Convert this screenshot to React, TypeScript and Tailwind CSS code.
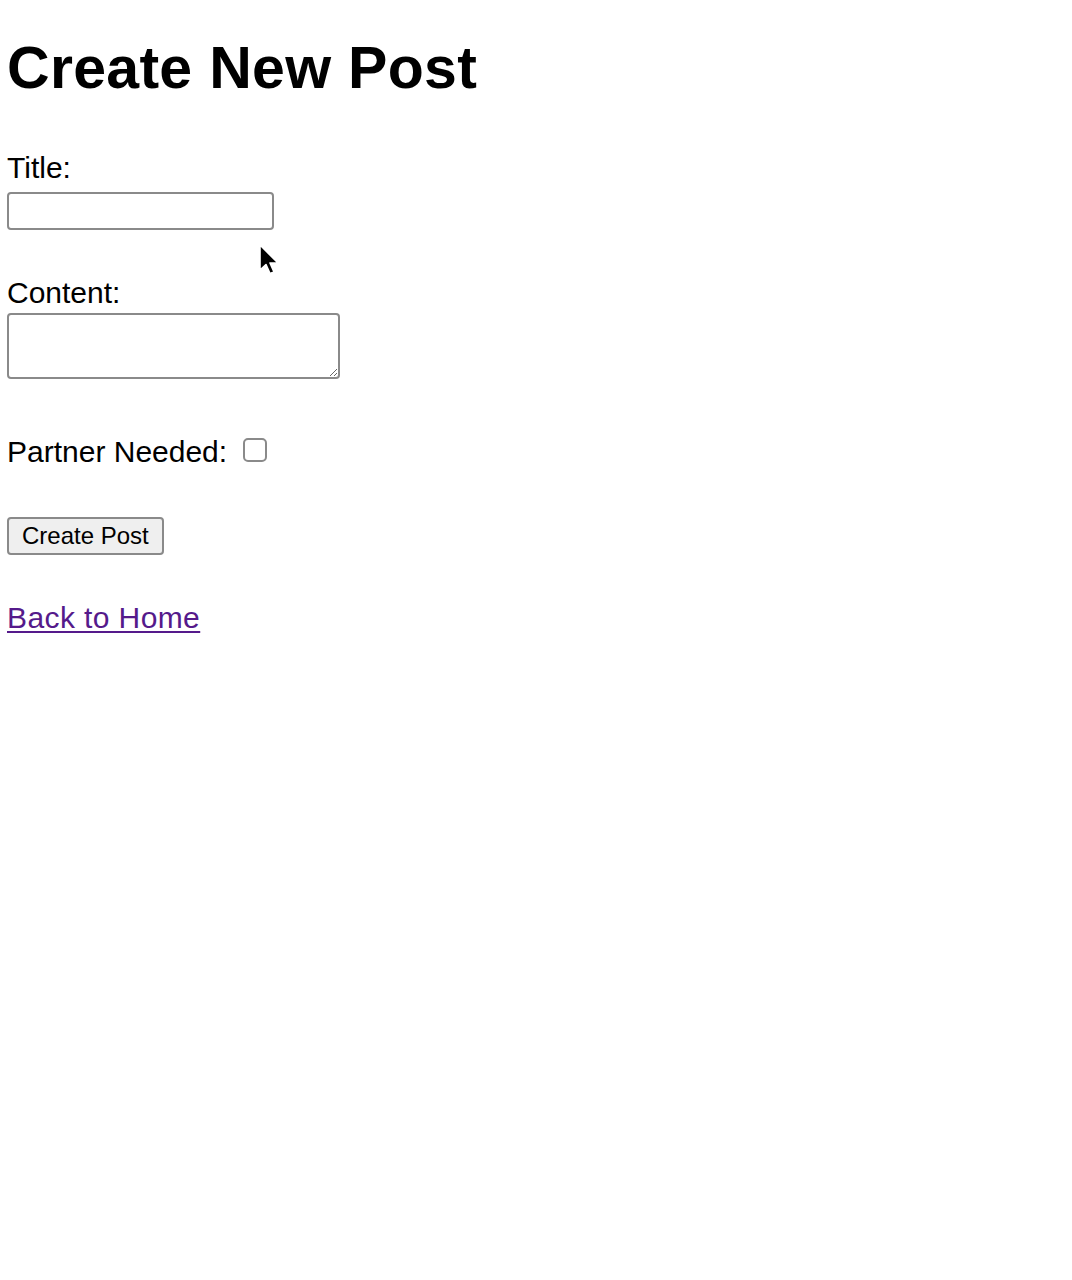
import React from "react";

export default function App() {
  return (
    <div className="relative min-h-[1280px] bg-white pl-[7px] text-black" style={{ fontFamily: '"Liberation Sans", Arial, Helvetica, sans-serif' }}>
      <h1 className="pt-[34px] text-[59px] leading-[68px] font-bold tracking-[0.3px]">Create New Post</h1>
      <form className="flex flex-col items-start" onSubmit={(e) => e.preventDefault()}>
        <label className="mt-[49px] block text-[30px] leading-[34px]">Title:</label>
        <input type="text" className="mt-[7px] block h-[38px] w-[267px] rounded-[4px] border-2 border-[#8a8a8a] bg-white px-2 text-[24px] outline-none" />
        <label className="mt-[46px] block text-[30px] leading-[34px]">Content:</label>
        <textarea className="mt-[3px] block h-[66px] w-[333px] resize-y rounded-[4px] border-2 border-[#8a8a8a] bg-white px-2 text-[24px] outline-none" />
        <div className="mt-[56px] flex h-[34px] items-start">
          <span className="text-[30px] leading-[34px]">Partner Needed:</span>
          <input type="checkbox" className="ml-[16px] mt-[3px] h-[24px] w-[24px] appearance-none rounded-[5px] border-2 border-[#8a8a8a] bg-white" />
        </div>
        <button type="submit" className="mt-[48px] flex h-[38px] items-center rounded-[4px] border-2 border-[#8a8a8a] bg-[#efefef] px-[13px] text-[24px] leading-[34px] text-black">
          Create Post
        </button>
        <a href="#" className="mt-[46px] block text-[30px] leading-[34px] tracking-[0.4px] text-[#551a8b] underline decoration-[2px] underline-offset-[3px]">
          Back to Home
        </a>
      </form>
      <svg className="absolute left-[257px] top-[243px]" width="24" height="36" viewBox="0 0 24 36">
        <path d="M3 2 L3 27 L9 21.5 L13 30.5 L17 29 L13 20 L21 20 Z" fill="#000" stroke="#fff" strokeWidth="1.6" strokeLinejoin="round" />
      </svg>
    </div>
  );
}
